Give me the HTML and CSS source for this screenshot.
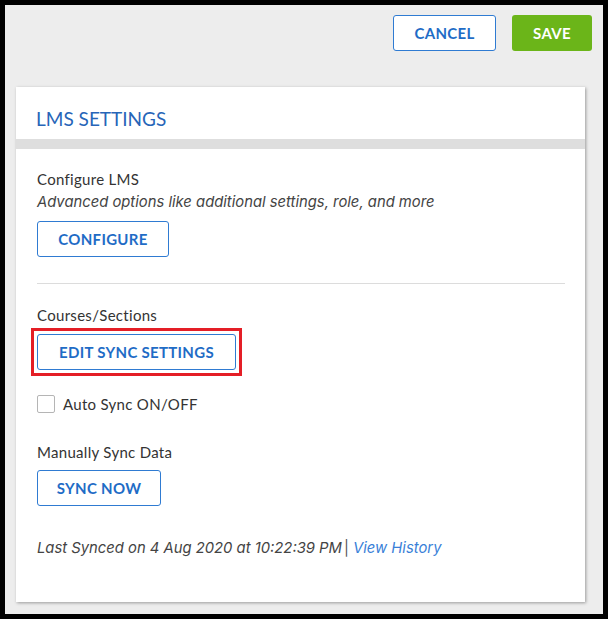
FILE: index.html
```html
<!DOCTYPE html>
<html>
<head>
<meta charset="utf-8">
<link rel="stylesheet" href="styles.css">
</head>
<body>
<div class="frame">
  <div class="actions">
    <button class="btn btn-outline btn-cancel">CANCEL</button>
    <button class="btn btn-save">SAVE</button>
  </div>
  <div class="card">
    <div class="card-head">LMS SETTINGS</div>
    <div class="card-bar"></div>
    <div class="card-body">
      <div class="section">
        <div class="label">Configure LMS</div>
        <div class="hint">Advanced options like additional settings, role, and more</div>
        <button class="btn btn-outline btn-configure">CONFIGURE</button>
      </div>
      <div class="divider"></div>
      <div class="section courses">
        <div class="label">Courses/Sections</div>
        <div class="highlight">
          <button class="btn btn-outline btn-edit">EDIT SYNC SETTINGS</button>
        </div>
      </div>
      <label class="check-row">
        <span class="checkbox"></span>
        <span class="check-label">Auto Sync ON/OFF</span>
      </label>
      <div class="section manual">
        <div class="label">Manually Sync Data</div>
        <button class="btn btn-outline btn-sync">SYNC NOW</button>
      </div>
      <div class="last-synced">Last Synced on 4 Aug 2020 at 10:22:39 PM<span class="sep">|</span> <a class="link">View History</a></div>
    </div>
  </div>
</div>
</body>
</html>
```

FILE: styles.css
```css
* { box-sizing: border-box; }
html, body { margin: 0; padding: 0; }
body {
  background: #000;
  width: 608px;
  height: 619px;
  padding: 5px;
  font-family: "Lato", "Open Sans", sans-serif;
}
.frame {
  background: #ededed;
  width: 598px;
  height: 609px;
  padding: 10px 11px 0 11px;
}
.actions {
  display: flex;
  justify-content: flex-end;
  gap: 16px;
  height: 36px;
}
.btn {
  font-family: inherit;
  font-weight: 700;
  font-size: 15px;
  letter-spacing: 0.3px;
  border-radius: 3px;
  cursor: pointer;
  height: 36px;
  padding: 0;
}
.btn-outline {
  background: #fff;
  color: #1f6cc6;
  border: 1px solid #2f7bd2;
}
.btn-cancel { width: 103px; }
.btn-save {
  width: 80px;
  background: #6bb519;
  color: #fff;
  border: none;
}
.card {
  margin-top: 36px;
  background: #fff;
  width: 569px;
  height: 515px;
  box-shadow: 1px 1px 3px rgba(0,0,0,0.35);
}
.card-head {
  height: 52px;
  padding: 20px 0 0 20px;
  font-size: 19px;
  color: #2765b8;
  font-weight: 400;
  line-height: 24px;
}
.card-bar {
  height: 10px;
  background: #dedede;
}
.card-body {
  padding: 20px 20px 0 21px;
  color: #333;
  font-size: 15px;
  letter-spacing: 0.3px;
}
.label { line-height: 20px; }
.hint {
  font-family: "Inter", sans-serif;
  font-size: 14.8px;
  letter-spacing: 0;
  font-style: italic;
  color: #444;
  line-height: 20px;
  margin-top: 3px;
}
.btn-configure {
  margin-top: 9px;
  width: 132px;
  height: 36px;
}
.divider {
  height: 1px;
  background: #dcdcdc;
  margin-top: 26px;
}
.courses { margin-top: 21px; }
.highlight {
  margin: 3px 0 0 -6px;
  width: 211px;
  height: 48px;
  border: 3px solid #e41e26;
  padding: 3px;
}
.btn-edit { width: 199px; height: 36px; display: block; }
.check-row {
  display: flex;
  align-items: center;
  gap: 8px;
  margin-top: 19px;
  height: 18px;
}
.checkbox {
  width: 18px;
  height: 18px;
  border: 1px solid #b5b5b5;
  border-radius: 2px;
  background: #fff;
}
.manual { margin-top: 29px; }
.btn-sync {
  margin-top: 8px;
  width: 124px;
}
.last-synced {
  margin-top: 32px;
  font-family: "Inter", sans-serif;
  font-size: 14.8px;
  letter-spacing: 0;
  font-style: italic;
  color: #444;
  line-height: 20px;
}
.sep { font-style: normal; margin-left: 2px; color: #555; }
.link { color: #3a7fd8; }
```
